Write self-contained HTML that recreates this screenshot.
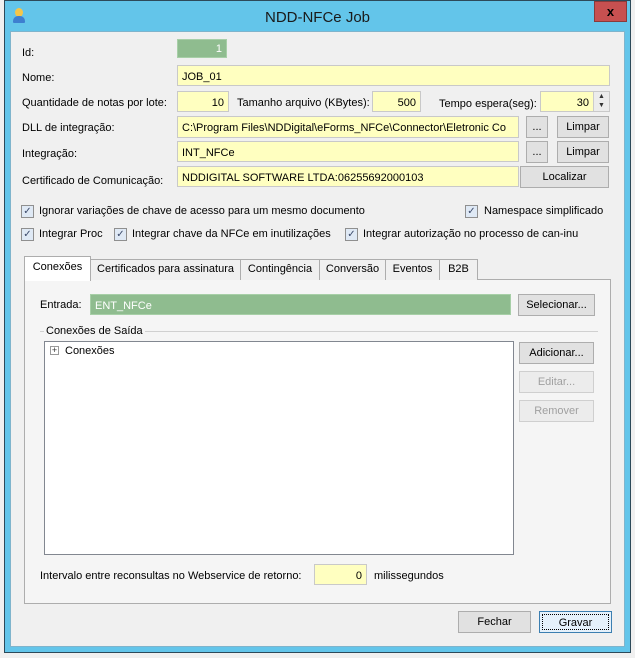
<!DOCTYPE html>
<html><head><meta charset="utf-8"><style>
*{box-sizing:border-box;margin:0;padding:0}
body{width:635px;height:658px;background:#f0f0f0;font-family:"Liberation Sans",sans-serif;font-size:11px;color:#000;position:relative;overflow:hidden}
.a{position:absolute;white-space:nowrap}
.win{position:absolute;left:4px;top:0;width:627px;height:653px;background:#63c5ea;border:1px solid #2d4a5a}
.client{position:absolute;left:10px;top:31px;width:615px;height:616px;background:#f0f0f0;border:1px solid #7fb4cc}
.f{position:absolute;background:#ffffc0;border:1px solid #c9c9c9;height:21px;padding:5px 4px 0;line-height:13px;white-space:nowrap;overflow:hidden}
.r{text-align:right}
.g{background:#8fbc8f;color:#fff;border-color:#a7cfa7}
.b{position:absolute;background:#e1e1e1;border:1px solid #adadad;height:22px;text-align:center;line-height:20px}
.cb{position:absolute;width:13px;height:13px;border:1px solid #8f8f8f;background:#dfe9f5;font-size:10px;line-height:11px;text-align:center;color:#3b4a6b}
.tab{position:absolute;top:259px;height:21px;border:1px solid #adadad;border-bottom:none;background:#f0f0f0;text-align:center;line-height:19px}
</style></head><body>
<div class="win"></div>
<div class="a" style="left:12px;top:8px;width:14px;height:16px">
<div style="position:absolute;left:3px;top:0;width:8px;height:9px;border-radius:50%;background:#f4c64a"></div>
<div style="position:absolute;left:1px;top:8px;width:12px;height:7px;border-radius:5px 5px 1px 1px;background:#3d7fd0"></div></div>
<div class="a" style="left:0;width:635px;top:9px;text-align:center;font-size:15px;color:#1a1a1a">NDD-NFCe Job</div>
<div class="a" style="left:594px;top:1px;width:33px;height:21px;background:#c75050;border:1px solid #8a3a3a;color:#000;font-weight:bold;text-align:center;line-height:19px;font-size:13px">x</div>
<div class="client"></div>

<div class="a" style="left:22px;top:47px">Id:</div>
<div class="f g r" style="left:177px;top:39px;width:50px;height:19px;padding-top:3px">1</div>
<div class="a" style="left:22px;top:72px">Nome:</div>
<div class="f" style="left:177px;top:65px;width:433px">JOB_01</div>
<div class="a" style="left:22px;top:97px">Quantidade de notas por lote:</div>
<div class="f r" style="left:177px;top:91px;width:52px">10</div>
<div class="a" style="left:237px;top:97px">Tamanho arquivo (KBytes):</div>
<div class="f r" style="left:372px;top:91px;width:49px">500</div>
<div class="a" style="left:439px;top:98px">Tempo espera(seg):</div>
<div class="f r" style="left:540px;top:91px;width:70px;padding-right:20px">30</div>
<div class="a" style="left:593px;top:92px;width:16px;height:19px;background:#ececec;border-left:1px solid #ccc;font-size:7px;line-height:9px;text-align:center;color:#333">▲<br>▼</div>

<div class="a" style="left:22px;top:122px">DLL de integração:</div>
<div class="f" style="left:177px;top:116px;width:342px;height:22px">C:\Program Files\NDDigital\eForms_NFCe\Connector\Eletronic Co</div>
<div class="b" style="left:526px;top:116px;width:22px">...</div>
<div class="b" style="left:557px;top:116px;width:52px">Limpar</div>
<div class="a" style="left:22px;top:148px">Integração:</div>
<div class="f" style="left:177px;top:141px;width:342px">INT_NFCe</div>
<div class="b" style="left:526px;top:141px;width:22px">...</div>
<div class="b" style="left:557px;top:141px;width:52px">Limpar</div>
<div class="a" style="left:22px;top:175px">Certificado de Comunicação:</div>
<div class="f" style="left:177px;top:166px;width:342px">NDDIGITAL SOFTWARE LTDA:06255692000103</div>
<div class="b" style="left:520px;top:166px;width:89px">Localizar</div>

<div class="cb" style="left:21px;top:205px">✓</div><div class="a" style="left:39px;top:205px">Ignorar variações de chave de acesso para um mesmo documento</div>
<div class="cb" style="left:465px;top:205px">✓</div><div class="a" style="left:484px;top:205px">Namespace simplificado</div>
<div class="cb" style="left:21px;top:228px">✓</div><div class="a" style="left:39px;top:228px">Integrar Proc</div>
<div class="cb" style="left:114px;top:228px">✓</div><div class="a" style="left:132px;top:228px">Integrar chave da NFCe em inutilizações</div>
<div class="cb" style="left:345px;top:228px">✓</div><div class="a" style="left:363px;top:228px">Integrar autorização no processo de can-inu</div>

<div class="a" style="left:24px;top:279px;width:587px;height:325px;border:1px solid #adadad;background:#f5f5f5"></div>
<div class="tab" style="left:90px;width:151px">Certificados para assinatura</div>
<div class="tab" style="left:240px;width:80px">Contingência</div>
<div class="tab" style="left:319px;width:67px">Conversão</div>
<div class="tab" style="left:385px;width:55px">Eventos</div>
<div class="tab" style="left:439px;width:39px">B2B</div>
<div class="tab" style="left:24px;top:256px;width:67px;height:25px;background:#fff;line-height:21px">Conexões</div>

<div class="a" style="left:40px;top:299px">Entrada:</div>
<div class="f g" style="left:90px;top:294px;width:421px">ENT_NFCe</div>
<div class="b" style="left:518px;top:294px;width:77px">Selecionar...</div>
<div class="a" style="left:40px;top:331px;width:558px;height:1px;background:#d0d0d0"></div>
<div class="a" style="left:44px;top:325px;background:#f5f5f5;padding:0 2px">Conexões de Saída</div>
<div class="a" style="left:44px;top:341px;width:470px;height:214px;background:#fff;border:1px solid #828790"></div>
<div class="a" style="left:50px;top:346px;width:9px;height:9px;border:1px solid #999;font-size:9px;line-height:7px;text-align:center;color:#333;background:#fff">+</div>
<div class="a" style="left:65px;top:345px">Conexões</div>
<div class="b" style="left:519px;top:342px;width:75px">Adicionar...</div>
<div class="b" style="left:519px;top:371px;width:75px;color:#a0a0a0;border-color:#cfcfcf;background:#ececec">Editar...</div>
<div class="b" style="left:519px;top:400px;width:75px;color:#a0a0a0;border-color:#cfcfcf;background:#ececec">Remover</div>

<div class="a" style="left:40px;top:570px">Intervalo entre reconsultas no Webservice de retorno:</div>
<div class="f r" style="left:314px;top:564px;width:53px">0</div>
<div class="a" style="left:374px;top:570px">milissegundos</div>

<div class="b" style="left:458px;top:611px;width:73px">Fechar</div>
<div class="b" style="left:539px;top:611px;width:73px;border-color:#3c7fb1;background:#e5f1fb"><div style="position:absolute;left:2px;top:2px;right:2px;bottom:2px;border:1px dotted #000;line-height:16px">Gravar</div></div>
</body></html>
